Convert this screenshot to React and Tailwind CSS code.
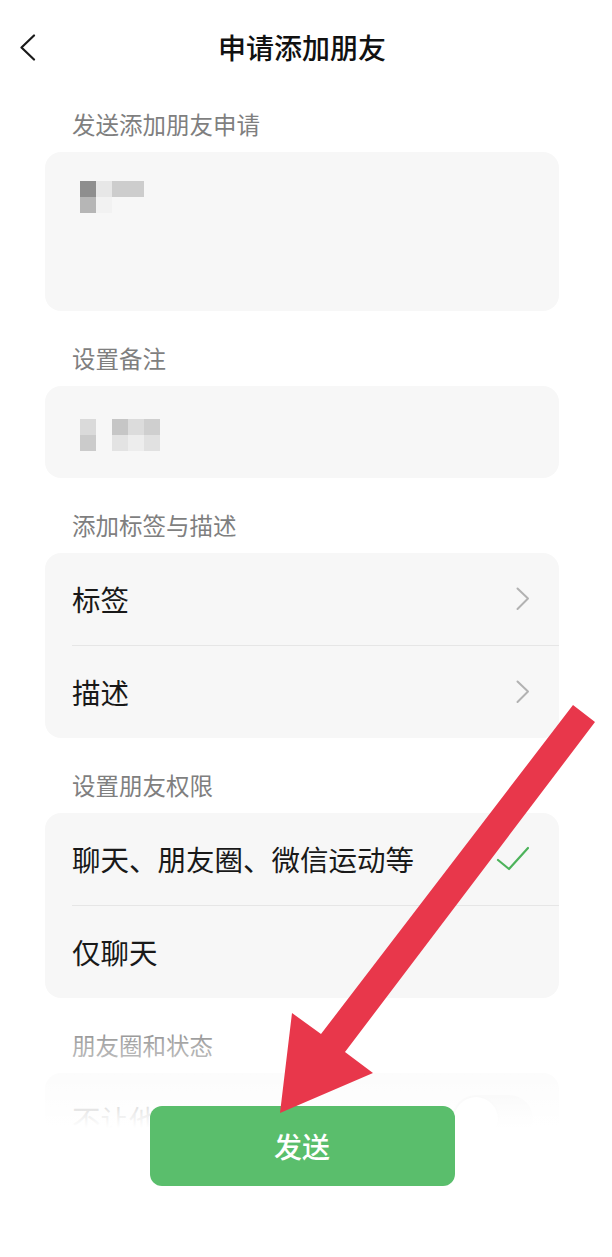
import React from "react";

const FONT = "font-['Noto_Sans_CJK_SC','Noto_Sans',sans-serif]";

function Label({ children, className = "" }) {
  return (
    <div className="h-[75px] pt-[32px] pl-[27px]">
      <div className={`text-[23.5px] leading-[30px] text-[#7f7f7f] ${className}`}>{children}</div>
    </div>
  );
}

function Chevron() {
  return (
    <svg width="14" height="24" viewBox="0 0 14 24" className="shrink-0">
      <polyline points="1.5,1.5 12,11.5 1.5,22" fill="none" stroke="#b2b2b2" strokeWidth="2" strokeLinecap="round" strokeLinejoin="round" />
    </svg>
  );
}

function Check() {
  return (
    <svg width="34" height="26" viewBox="0 0 34 26" className="shrink-0">
      <polyline points="2,14 13,23 32,2" fill="none" stroke="#4db35b" strokeWidth="2.2" strokeLinecap="round" strokeLinejoin="round" />
    </svg>
  );
}

function Row({ text, right }) {
  return (
    <div className="h-[92px] flex items-center justify-between pl-[27px] pr-[29px]">
      <span className="text-[28.5px] leading-[36px] text-[#191919]">{text}</span>
      {right}
    </div>
  );
}

function Divider() {
  return <div className="ml-[27px] h-px bg-[#e6e6e6]" />;
}

function Blocks({ rows }) {
  return (
    <div className="flex flex-col">
      {rows.map((r, i) => (
        <div key={i} className="flex">
          {r.map((c, j) => (
            <div key={j} className="w-[16px] h-[16px]" style={{ backgroundColor: c }} />
          ))}
        </div>
      ))}
    </div>
  );
}

export default function App() {
  return (
    <div className={`relative w-[612px] h-[1257px] overflow-hidden bg-white ${FONT}`}>
      {/* Header */}
      <div className="grid grid-cols-[1fr_auto_1fr] h-[77px]">
        <div className="pl-[19px] pt-[34px]">
          <svg width="18" height="27" viewBox="0 0 18 27">
            <polyline points="15,1.5 2.5,13.5 15,25.5" fill="none" stroke="#1a1a1a" strokeWidth="2.2" strokeLinecap="round" strokeLinejoin="round" />
          </svg>
        </div>
        <div className="pt-[29px] pr-[8px] text-[28px] leading-[36px] font-medium text-[#111111]">申请添加朋友</div>
        <div />
      </div>

      <div className="pl-[45px] pr-[53px] flex flex-col">
        <Label>发送添加朋友申请</Label>
        <div className="h-[159px] rounded-[16px] bg-[#f7f7f7] pt-[29px] pl-[35px]">
          <Blocks
            rows={[
              ["#8e8e8e", "#e7e7e7", "#cdcdcd", "#cdcdcd"],
              ["#b6b6b6", "#f2f2f2", "transparent", "transparent"],
            ]}
          />
        </div>

        <Label>设置备注</Label>
        <div className="h-[92px] rounded-[16px] bg-[#f7f7f7] pt-[33px] pl-[35px]">
          <Blocks
            rows={[
              ["#dadada", "transparent", "#c6c6c6", "#dcdcdc", "#cfcfcf"],
              ["#cbcbcb", "transparent", "#e3e3e3", "#ededed", "#e1e1e1"],
            ]}
          />
        </div>

        <Label>添加标签与描述</Label>
        <div className="rounded-[16px] bg-[#f7f7f7] flex flex-col">
          <Row text="标签" right={<Chevron />} />
          <Divider />
          <Row text="描述" right={<Chevron />} />
        </div>

        <Label>设置朋友权限</Label>
        <div className="rounded-[16px] bg-[#f7f7f7] flex flex-col">
          <Row text="聊天、朋友圈、微信运动等" right={<Check />} />
          <Divider />
          <Row text="仅聊天" />
        </div>

        <Label>朋友圈和状态</Label>
        <div className="rounded-[16px] bg-[#f7f7f7] flex flex-col">
          <div className="h-[92px] flex items-center justify-between pl-[27px] pr-[26px]">
            <span className="text-[28.5px] leading-[36px] text-[#191919]">不让他看</span>
            <div className="w-[81px] h-[48px] rounded-full bg-[#e9e9e9] p-[2px] flex items-center">
              <div className="w-[44px] h-[44px] rounded-full bg-white shadow-[0_1px_3px_rgba(0,0,0,0.2)]" />
            </div>
          </div>
        </div>
      </div>

      {/* Bottom fade + button */}
      <div className="absolute left-0 right-0 top-[1020px] bottom-0 bg-[linear-gradient(to_bottom,rgba(255,255,255,0)_0px,rgba(255,255,255,0.35)_26px,rgba(255,255,255,0.62)_55px,rgba(255,255,255,0.93)_95px,#ffffff_108px)] flex flex-col items-center">
        <button className="mt-[86px] ml-[-8px] w-[305px] h-[80px] rounded-[12px] bg-[#5abe6c] text-white text-[28px] font-medium leading-[36px] flex items-center justify-center">
          发送
        </button>
      </div>

      {/* Annotation arrow */}
      <svg className="absolute left-0 top-0 pointer-events-none" width="612" height="1257" viewBox="0 0 612 1257">
        <polygon
          points="573,705 595,722 345,1052 373,1073 280,1113 292,1013 321,1034"
          fill="#e8374b"
        />
      </svg>
    </div>
  );
}
